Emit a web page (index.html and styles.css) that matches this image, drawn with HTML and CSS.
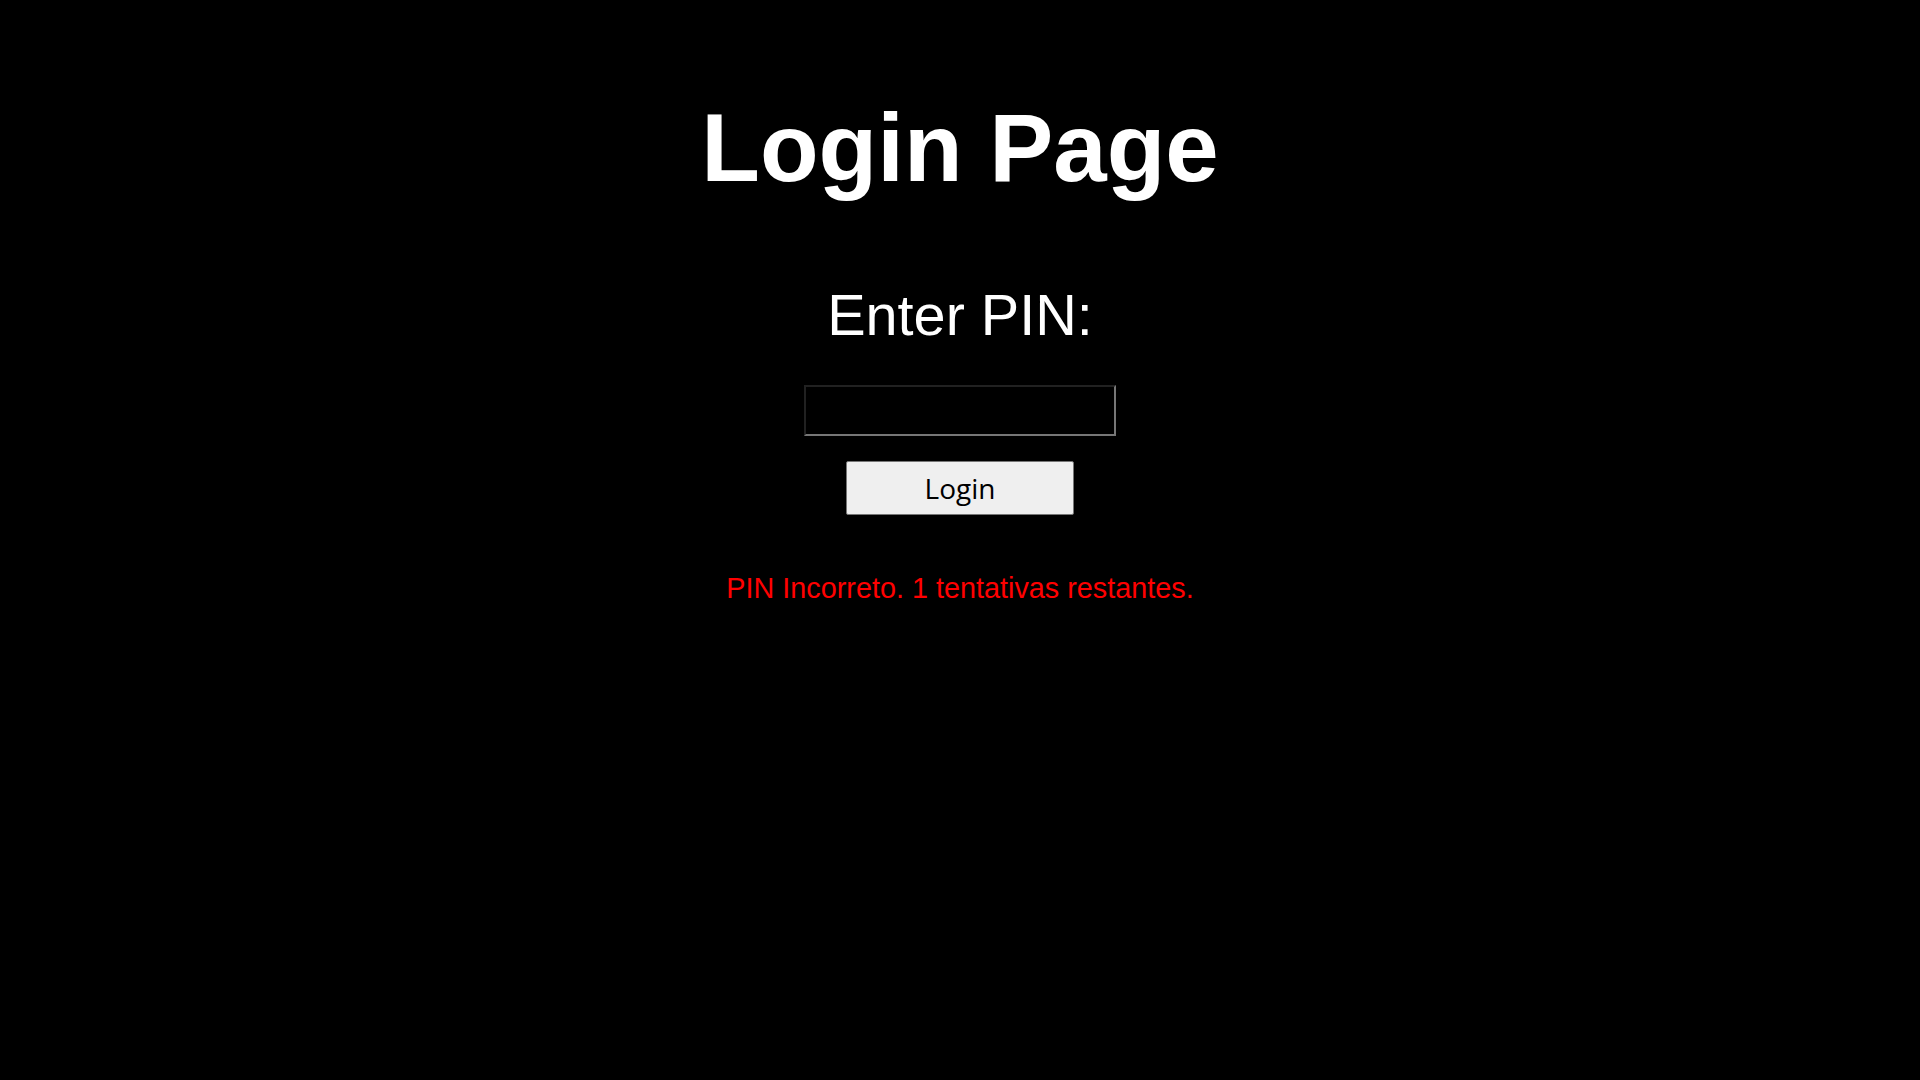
FILE: index.html
```html
<!DOCTYPE html>
<html lang="en">
<head>
<meta charset="utf-8">
<title>Login Page</title>
<link rel="stylesheet" href="styles.css">
</head>
<body>
<main class="page">
  <h1 class="title">Login Page</h1>
  <label class="pin-label" for="pin">Enter PIN:</label>
  <input class="pin-input" id="pin" type="password">
  <button class="login-btn" type="button">Login</button>
  <p class="error">PIN Incorreto. 1 tentativas restantes.</p>
</main>
</body>
</html>
```
FILE: styles.css
```css
html, body {
  margin: 0;
  padding: 0;
  background: #000;
  height: 100%;
}
body {
  font-family: "Liberation Sans", Arial, sans-serif;
  color: #fff;
}
.page {
  display: flex;
  flex-direction: column;
  align-items: center;
  padding-top: 93px;
}
.title {
  margin: 0;
  font-size: 96px;
  font-weight: 700;
  line-height: 110px;
}
.pin-label {
  margin-top: 79px;
  font-size: 57.6px;
  line-height: 66px;
}
.pin-input {
  margin-top: 37px;
  box-sizing: border-box;
  width: 312px;
  height: 51px;
  background: #000;
  color: #fff;
  border: 2px inset #767676;
  padding: 2px 6px;
  font-size: 24px;
}
.login-btn {
  margin-top: 25px;
  box-sizing: border-box;
  width: 228px;
  height: 54px;
  background: #efefef;
  border: 1px solid #767676;
  border-radius: 2px;
  color: #000;
  font-family: "Open Sans", "Noto Sans", sans-serif;
  font-size: 28px;
  padding: 0;
}
.error {
  margin: 57px 0 0;
  color: #ff0000;
  font-size: 28.8px;
  line-height: 33px;
}
```
